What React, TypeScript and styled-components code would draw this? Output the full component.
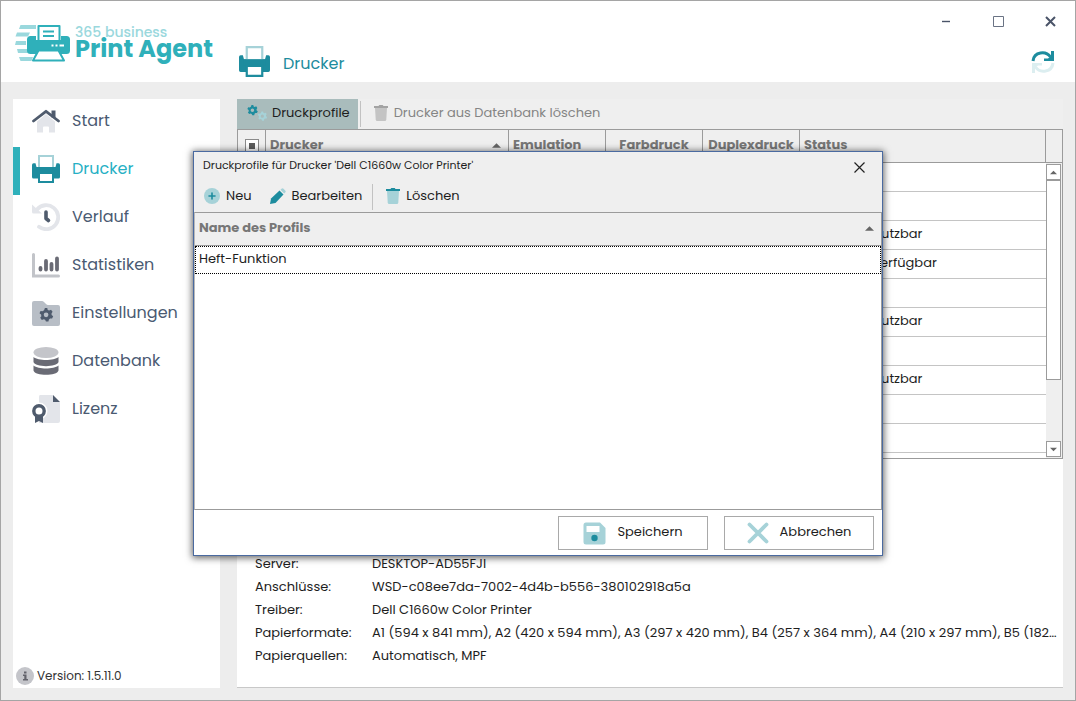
import React from "react";
import styled, { createGlobalStyle } from "styled-components";

const GlobalStyle = createGlobalStyle`
  *, *::before, *::after { box-sizing: border-box; }
  body {
    margin: 0;
    font-family: Poppins, Inter, "Open Sans", sans-serif;
    font-size: 13px;
    color: #1e1e1e;
    background: #ededed;
  }
  button { font: inherit; color: inherit; border: 0; background: none; padding: 0; margin: 0; }
  svg { display: block; flex: none; }
`;

const Window = styled.div`
  position: relative;
  display: flex;
  flex-direction: column;
  min-height: 100vh;
  border: 1px solid #a5a5a5;
  background: #ededed;
`;

const Header = styled.header`
  display: flex;
  height: 81px;
  background: #fff;
`;

const Brand = styled.div`
  display: flex;
  gap: 4px;
  width: 224px;
  padding: 22px 0 0 14px;
`;

const BrandText = styled.div`
  display: flex;
  flex-direction: column;
  padding-top: 2px;
  font-weight: 600;
  white-space: nowrap;
`;

const BrandSmall = styled.span`
  font-size: 14px;
  font-weight: 500;
  line-height: 15px;
  color: #9ad8dd;
`;

const BrandLarge = styled.span`
  font-size: 24px;
  font-weight: 700;
  line-height: 18px;
  color: #2fb0ba;
`;

const PageTitle = styled.h1`
  display: flex;
  align-items: center;
  gap: 13px;
  margin: 0;
  padding-top: 43px;
  height: 78px;
  font-size: 16px;
  font-weight: 400;
  color: #1d8c9e;
  flex: 1;
  margin-left: 14px;
`;

const TitleText = styled.span`
  padding-top: 3px;
`;

const HeaderSide = styled.div`
  display: flex;
  flex-direction: column;
  align-items: flex-end;
  gap: 9px;
`;

const WindowControls = styled.div`
  display: flex;
  height: 40px;
`;

const WindowButton = styled.button`
  display: grid;
  place-items: center;
  width: 52px;
  height: 40px;
  padding-left: 2px;
`;

const RefreshButton = styled.button`
  margin-right: 20px;
`;

const Body = styled.div`
  flex: 1;
  display: flex;
  gap: 17px;
  padding: 17px 12px 12px;
`;

const Sidebar = styled.aside`
  display: flex;
  flex-direction: column;
  justify-content: space-between;
  width: 207px;
  flex: none;
  background: #fff;
`;

const NavItem = styled.a<{ $active?: boolean }>`
  display: flex;
  align-items: center;
  gap: 12px;
  height: 48px;
  padding: 0 0 4px 12px;
  border-left: 7px solid ${(p) => (p.$active ? "#2fb0ba" : "transparent")};
  color: ${(p) => (p.$active ? "#26b0c4" : "#4a5a72")};
  font-size: 16px;
  text-decoration: none;
`;

const NavLabel = styled.span`
  padding-bottom: 2px;
`;

const Version = styled.div`
  display: flex;
  align-items: center;
  gap: 3px;
  height: 24px;
  padding-left: 3px;
  font-size: 12px;
  color: #333;
`;

const Main = styled.main`
  flex: 1;
  min-width: 0;
  display: flex;
  flex-direction: column;
  background: #fff;
  border-bottom: 1px solid #c8c8c8;
`;

const Toolbar = styled.div`
  display: flex;
  align-items: center;
  height: 30px;
  background: #efefef;
`;

const ToolButton = styled.button<{ $active?: boolean; $muted?: boolean }>`
  display: flex;
  align-items: center;
  gap: ${(p) => (p.$active ? "5px" : "6px")};
  height: 30px;
  padding: 0 8px 2px 10px;
  white-space: nowrap;
  background: ${(p) => (p.$active ? "#a9bcbc" : "transparent")};
  color: ${(p) => (p.$muted ? "#858585" : "inherit")};
`;

const Divider = styled.span`
  width: 1px;
  height: 26px;
  margin: 0 3px 0 2px;
  background: #c2c2c2;
`;

const GridFrame = styled.div`
  display: flex;
  min-height: 330px;
  border: 1px solid #9b9b9b;
`;

const GridArea = styled.div`
  flex: 1;
  min-width: 0;
`;

const Table = styled.table`
  width: 100%;
  table-layout: fixed;
  border-collapse: separate;
  border-spacing: 0;
`;

const Th = styled.th<{ $w?: number; $center?: boolean }>`
  width: ${(p) => (p.$w ? p.$w + "px" : "auto")};
  height: 33px;
  padding: 0 4px 2px;
  text-align: ${(p) => (p.$center ? "center" : "left")};
  font-weight: 700;
  white-space: nowrap;
  color: #777;
  background: #efefef;
  border-right: 1px solid #9b9b9b;
  border-bottom: 1px solid #9b9b9b;
`;

const HeadLabel = styled.span`
  display: flex;
  justify-content: space-between;
  align-items: center;
  line-height: 16px;
  padding-right: 3px;
`;

const TickBox = styled.input`
  appearance: none;
  display: block;
  width: 14px;
  height: 14px;
  margin: 2px 0 0 3px;
  padding: 3px;
  border: 1px solid #8a8a8a;
  background-color: #fff;
  background-image: linear-gradient(#5c5c5c, #5c5c5c);
  background-origin: content-box;
  background-size: 6px 6px;
  background-repeat: no-repeat;
`;

const Td = styled.td`
  height: 29px;
  padding: 0 0 2px 36px;
  white-space: nowrap;
  border-bottom: 1px solid #c4c4c4;
`;

const ScrollColumn = styled.div`
  display: flex;
  flex-direction: column;
  width: 16px;
  background: #efefef;
`;

const ScrollHead = styled.div`
  height: 33px;
  border-bottom: 1px solid #9b9b9b;
`;

const ScrollTrack = styled.div`
  flex: 1;
  display: flex;
  flex-direction: column;
  padding: 1px 1px 1px 0;
`;

const ScrollButton = styled.button`
  display: grid;
  place-items: center;
  height: 16px;
  border: 1px solid #9b9b9b;
  background: #fff;
`;

const ScrollThumb = styled.div`
  height: 200px;
  margin-bottom: auto;
  border: 1px solid #9b9b9b;
  background: #fff;
`;

const Details = styled.dl`
  flex: 1;
  display: flex;
  flex-direction: column;
  justify-content: flex-end;
  margin: 0;
  padding: 0 4px 20px 18px;
`;

const DetailRow = styled.div`
  display: flex;
  line-height: 23px;
`;

const Term = styled.dt`
  width: 117px;
  flex: none;
`;

const Value = styled.dd`
  margin: 0;
  min-width: 0;
  overflow: hidden;
  text-overflow: ellipsis;
  white-space: nowrap;
`;

const Overlay = styled.div`
  position: absolute;
  inset: 0;
  display: flex;
  justify-content: center;
  align-items: flex-start;
  padding-top: 150px;
`;

const Dialog = styled.section`
  display: flex;
  flex-direction: column;
  width: 690px;
  max-width: 100%;
  border: 1px solid #4a6aa0;
  background: #efefef;
  box-shadow: 0 1px 7px 1px rgba(0, 0, 0, 0.6);
`;

const DialogHead = styled.div`
  display: flex;
  justify-content: space-between;
  height: 30px;
  padding: 0 12px 0 9px;
`;

const DialogTitle = styled.h2`
  margin: 0;
  font-size: 11px;
  font-weight: 400;
  line-height: 27px;
`;

const CloseButton = styled.button`
  display: grid;
  place-items: center;
  width: 22px;
  height: 30px;
`;

const ProfileList = styled.div`
  min-height: 298px;
  background: #fff;
  border: 1px solid #9b9b9b;
  border-left-color: #b8b8b8;
`;

const ProfileTh = styled.th`
  height: 33px;
  padding: 0 4px 2px;
  text-align: left;
  font-weight: 700;
  color: #777;
  background: #efefef;
  border-bottom: 1px solid #9b9b9b;
`;

const ProfileTd = styled.td`
  height: 28px;
  padding: 0 0 3px 3px;
  border: 1px dotted #000;
`;

const DialogFoot = styled.div`
  display: flex;
  justify-content: flex-end;
  gap: 16px;
  padding: 6px 8px 5px;
  background: #fff;
`;

const FootButton = styled.button`
  display: flex;
  align-items: center;
  justify-content: center;
  gap: 11px;
  width: 150px;
  height: 34px;
  border: 1px solid #a9a9a9;
  background: #fff;
`;

const FootLabel = styled.span`
  padding-bottom: 2px;
`;

const gearPath =
  "M5 0h2l.4 1.6 1.2.6L10.200 1.500 11.500 3.200 10.600 4.600 10.700 6 12 7l-.9 2-1.700-.1-1 .9L8 11.500H5.900L5.200 10 4 9.500l-1.600.6L1 8.300 2 7 1.800 5.500.400 4.500 1.300 2.600 3 2.800l1.300-.9zM6 3.800a2 2 0 1 0 0 4 2 2 0 0 0 0-4z";

const PrinterIcon = ({ size = 28 }: { size?: number }) => (
  <svg width={size} height={size} viewBox="0 0 28 28">
    <path fill="#1d8c9e" d="M0 10Q0 8.300 1.500 8.300H3.500L4.500 12H23.500L24.500 8.300H26.500Q28 8.300 28 10V22Q28 23.500 26.500 23.500H1.500Q0 23.500 0 22z" />
    <path fill="#fff" stroke="#a6d2d8" strokeWidth="2" d="M7 12V1h14v11" />
    <path fill="#1d8c9e" d="M4 12h20v6H4z" />
    <path fill="#fff" stroke="#1d8c9e" strokeWidth="2" d="M7 18h14v9H7z" />
  </svg>
);

const HomeIcon = () => (
  <svg width="28" height="28" viewBox="0 0 28 28">
    <path fill="#e3e5ea" d="M14 7 23 14.500v11h-6v-5q0-1-1-1h-4q-1 0-1 1v5H5v-11z" />
    <path fill="#4f5b6d" d="M19.500 3.500h4v7h-4z" />
    <path fill="none" stroke="#4f5b6d" strokeWidth="2.800" strokeLinecap="round" strokeLinejoin="round" d="M1.500 14 14 4.300 26.500 14" />
  </svg>
);

const HistoryIcon = () => (
  <svg width="28" height="28" viewBox="0 0 28 28">
    <path fill="none" stroke="#e3e5ea" strokeWidth="3.800" strokeLinecap="round" d="M5 6.500A12 12 0 1 1 7 23.800" />
    <path fill="#e3e5ea" d="M0 1.500 10 10.500H1.500Q0 10.500 0 9z" />
    <path fill="none" stroke="#4f5b6d" strokeWidth="3.600" strokeLinecap="round" strokeLinejoin="round" d="M14 9v6.500l2.500 2" />
  </svg>
);

const ChartIcon = () => (
  <svg width="28" height="28" viewBox="0 0 28 28">
    <path fill="none" stroke="#c2c4c9" strokeWidth="3" strokeLinecap="round" d="M1.500 3.500V25H26.500" />
    <path fill="none" stroke="#6a6b75" strokeWidth="3.800" strokeLinecap="round" d="M8.500 17v1.500M14 10v8.500M19.500 13v5.500M25 7.500v11" />
  </svg>
);

const FolderIcon = () => (
  <svg width="28" height="28" viewBox="0 0 28 28">
    <path fill="#b8bec6" d="M2 2h8q1 0 2 1l2 2q1 1 2 1h10q2 0 2 2v17q0 2-2 2H2q-2 0-2-2V4q0-2 2-2z" />
    <g transform="translate(7 9) scale(1.180)">
      <path fill="#4f5b6d" fillRule="evenodd" d={gearPath} />
    </g>
  </svg>
);

const DatabaseIcon = () => (
  <svg width="28" height="28" viewBox="0 0 28 28">
    <path fill="#6a6b75" d="M1.500 18.500C6 22.500 22 22.500 26.500 18.500V23.500C25 29.300 3 29.300 1.500 23.500z" />
    <path fill="#6a6b75" d="M1.500 10C6 14 22 14 26.500 10V15C25 20.500 3 20.500 1.500 15z" />
    <ellipse cx="14" cy="5.500" rx="12.500" ry="5.500" fill="#c4c5ca" />
  </svg>
);

const LicenseIcon = () => (
  <svg width="28" height="28" viewBox="0 0 28 28">
    <path fill="#e3e5ea" d="M8 0h13v7h7v19q0 2-2 2H7V2q0-2 1-2z" />
    <path fill="#4f5b6d" d="M21 0l7 7h-7z" />
    <circle cx="7" cy="16" r="8.500" fill="#fff" />
    <path fill="#4f5b6d" d="M3 20v8l4-2 4 2v-8z" />
    <circle cx="7" cy="16" r="5.200" fill="#fff" stroke="#4f5b6d" strokeWidth="3.400" />
  </svg>
);

const InfoIcon = () => (
  <svg width="18" height="18" viewBox="0 0 18 18">
    <circle cx="9" cy="9" r="9" fill="#c4c5ca" />
    <path fill="#62636b" d="M8 4.500h2.500v2H8zM7 7.500h3.500V12H12v1.500H7V12h1.300V9H7z" />
  </svg>
);

const TrashIcon = ({ lid, can }: { lid: string; can: string }) => (
  <svg width="14" height="16" viewBox="0 0 14 16">
    <path fill={can} d="M1 3h12l-.7 11.500Q12.200 16 10.800 16H3.200Q1.800 16 1.700 14.500z" />
    <path fill={lid} d="M0 1h4.500L5.300 0h3.400l.8 1H14v2H0z" />
  </svg>
);

const GearsIcon = () => (
  <svg width="20" height="16" viewBox="0 0 20 16">
    <path fill="#1d8c9e" fillRule="evenodd" d={gearPath} transform="scale(.9)" />
    <path fill="#a6d2d8" fillRule="evenodd" d={gearPath} transform="translate(10.500 6.500) scale(.8)" />
  </svg>
);

const PlusIcon = () => (
  <svg width="16" height="16" viewBox="0 0 16 16">
    <circle cx="8" cy="8" r="8" fill="#a6d2d8" />
    <path stroke="#1d8c9e" strokeWidth="1.600" strokeLinecap="round" d="M8 5v6M5 8h6" />
  </svg>
);

const PencilIcon = () => (
  <svg width="16" height="16" viewBox="0 0 16 16">
    <path fill="#1d8c9e" d="M1 10.500 9.500 2.500l4 4L5.500 15 0 16z" />
    <path fill="#a6d2d8" d="M10.500 1.800 11.500.8q1-1 2 0L15.200 2.500q1 1 0 2L14.200 5.500z" />
  </svg>
);

const SaveIcon = () => (
  <svg width="23" height="23" viewBox="0 0 23 23">
    <path fill="#a6d2d8" d="M3 .5h14L22.500 6v14q0 2.500-2.500 2.500H3Q.5 22.500.5 20V3Q.5.5 3 .5z" />
    <path fill="#fff" d="M3.500 4h13v6h-13z" />
    <circle cx="11.500" cy="16" r="3.200" fill="#1d8c9e" />
  </svg>
);

const CancelIcon = () => (
  <svg width="22" height="22" viewBox="0 0 22 22">
    <path stroke="#a6d2d8" strokeWidth="3.800" strokeLinecap="round" d="M2.500 2.500l17 17M19.500 2.500l-17 17" />
  </svg>
);

const RefreshIcon = () => (
  <svg width="24" height="24" viewBox="0 0 24 24">
    <path fill="none" stroke="#1d8c9e" strokeWidth="3" d="M2 11C3 1.500 15 .500 19.500 7" />
    <path fill="#1d8c9e" d="M20 1h3v10H13V8.500h4L20 6z" />
    <path fill="none" stroke="#dceef0" strokeWidth="3" d="M22 13C21 22.500 9 23.500 4.500 17" />
    <path fill="#dceef0" d="M4 23H1V13h10v2.500H7L4 18z" />
  </svg>
);

const LogoIcon = () => (
  <svg width="56" height="40" viewBox="15 23 56 40">
    <path fill="#9ad8dd" d="M20.500 25H36v4H19zM17 32.500h13l-2 4H15.500zM16 41h10v4H15zM17 49h10l2 4H18zM19 57h14l-1.500 4H20.500z" />
    <rect x="27" y="36" width="43" height="18" rx="3.500" fill="#2fb0ba" />
    <path fill="#fff" d="M36 25h25v15H36z" />
    <path fill="#fff" stroke="#2fb0ba" strokeWidth="2" strokeLinejoin="round" d="M38.500 40V26h21v14" />
    <path stroke="#2fb0ba" strokeWidth="1.800" d="M43 31.500h11M43 36h11" />
    <path fill="#2fb0ba" d="M35 40h27v8H35z" />
    <path fill="#fff" stroke="#2fb0ba" strokeWidth="2" strokeLinejoin="round" d="M38.500 50.500h20L64 60.500H33z" />
    <path stroke="#fff" strokeWidth="1.800" d="M51.500 45.500h2M55.500 45.500h2M59.500 45.500h4.500" />
  </svg>
);

const Arrow = ({ down, w = 9 }: { down?: boolean; w?: number }) => (
  <svg width={w} height="5" viewBox="0 0 10 5">
    <path fill="#666" d={down ? "M0 0h10L5 5z" : "M0 5h10L5 0z"} />
  </svg>
);

const navItems = [
  { label: "Start", icon: <HomeIcon /> },
  { label: "Drucker", icon: <PrinterIcon />, active: true },
  { label: "Verlauf", icon: <HistoryIcon /> },
  { label: "Statistiken", icon: <ChartIcon /> },
  { label: "Einstellungen", icon: <FolderIcon /> },
  { label: "Datenbank", icon: <DatabaseIcon /> },
  { label: "Lizenz", icon: <LicenseIcon /> },
];

const statuses = ["", "", "Nicht nutzbar", "Nicht verfügbar", "", "Nicht nutzbar", "", "Nicht nutzbar", "", ""];

const details = [
  ["Server:", "DESKTOP-AD55FJI"],
  ["Anschlüsse:", "WSD-c08ee7da-7002-4d4b-b556-380102918a5a"],
  ["Treiber:", "Dell C1660w Color Printer"],
  [
    "Papierformate:",
    "A1 (594 x 841 mm), A2 (420 x 594 mm), A3 (297 x 420 mm), B4 (257 x 364 mm), A4 (210 x 297 mm), B5 (182 x 257 mm)",
  ],
  ["Papierquellen:", "Automatisch, MPF"],
];

export default function App() {
  return (
    <Window>
      <GlobalStyle />
      <Header>
        <Brand>
          <LogoIcon />
          <BrandText>
            <BrandSmall>365 business</BrandSmall>
            <BrandLarge>Print Agent</BrandLarge>
          </BrandText>
        </Brand>
        <PageTitle>
          <PrinterIcon size={31} />
          <TitleText>Drucker</TitleText>
        </PageTitle>
        <HeaderSide>
          <WindowControls>
            <WindowButton aria-label="Minimieren">
              <svg width="10" height="10" viewBox="0 0 10 10"><path stroke="#4a5468" strokeWidth="1.400" d="M1 5.500h8" /></svg>
            </WindowButton>
            <WindowButton aria-label="Maximieren">
              <svg width="11" height="11" viewBox="0 0 11 11"><path fill="none" stroke="#6a7384" d="M.5.500h10v10h-10z" /></svg>
            </WindowButton>
            <WindowButton aria-label="Schließen">
              <svg width="11" height="11" viewBox="0 0 11 11"><path stroke="#4a5468" strokeWidth="2" d="M1 1l9 9M10 1l-9 9" /></svg>
            </WindowButton>
          </WindowControls>
          <RefreshButton aria-label="Aktualisieren"><RefreshIcon /></RefreshButton>
        </HeaderSide>
      </Header>
      <Body>
        <Sidebar>
          <nav>
            {navItems.map((n) => (
              <NavItem key={n.label} href="#" $active={n.active}>
                {n.icon}
                <NavLabel>{n.label}</NavLabel>
              </NavItem>
            ))}
          </nav>
          <Version>
            <InfoIcon />
            Version: 1.5.11.0
          </Version>
        </Sidebar>
        <Main>
          <Toolbar>
            <ToolButton $active>
              <GearsIcon />
              Druckprofile
            </ToolButton>
            <Divider />
            <ToolButton $muted>
              <TrashIcon lid="#a3a3a3" can="#c4c4c4" />
              Drucker aus Datenbank löschen
            </ToolButton>
          </Toolbar>
          <GridFrame>
            <GridArea>
              <Table>
                <thead>
                  <tr>
                    <Th $w={28}><TickBox type="checkbox" aria-label="Alle auswählen" /></Th>
                    <Th $w={243}><HeadLabel>Drucker<Arrow /></HeadLabel></Th>
                    <Th $w={97}>Emulation</Th>
                    <Th $w={97} $center>Farbdruck</Th>
                    <Th $w={97} $center>Duplexdruck</Th>
                    <Th>Status</Th>
                  </tr>
                </thead>
                <tbody>
                  {statuses.map((s, i) => (
                    <tr key={i}>
                      <Td /><Td /><Td /><Td /><Td />
                      <Td>{s}</Td>
                    </tr>
                  ))}
                </tbody>
              </Table>
            </GridArea>
            <ScrollColumn>
              <ScrollHead />
              <ScrollTrack>
                <ScrollButton aria-label="Nach oben"><Arrow w={7} /></ScrollButton>
                <ScrollThumb />
                <ScrollButton aria-label="Nach unten"><Arrow down w={7} /></ScrollButton>
              </ScrollTrack>
            </ScrollColumn>
          </GridFrame>
          <Details>
            {details.map(([k, v]) => (
              <DetailRow key={k}>
                <Term>{k}</Term>
                <Value>{v}</Value>
              </DetailRow>
            ))}
          </Details>
        </Main>
      </Body>
      <Overlay>
        <Dialog role="dialog" aria-labelledby="dialog-title">
          <DialogHead>
            <DialogTitle id="dialog-title">Druckprofile für Drucker 'Dell C1660w Color Printer'</DialogTitle>
            <CloseButton aria-label="Schließen">
              <svg width="11" height="11" viewBox="0 0 11 11"><path stroke="#222" strokeWidth="1.200" d="M.5.500l10 10M10.500.500l-10 10" /></svg>
            </CloseButton>
          </DialogHead>
          <Toolbar>
            <ToolButton><PlusIcon />Neu</ToolButton>
            <ToolButton><PencilIcon />Bearbeiten</ToolButton>
            <Divider />
            <ToolButton><TrashIcon lid="#1d8c9e" can="#a6d2d8" />Löschen</ToolButton>
          </Toolbar>
          <ProfileList>
            <Table>
              <thead>
                <tr>
                  <ProfileTh><HeadLabel>Name des Profils<Arrow /></HeadLabel></ProfileTh>
                </tr>
              </thead>
              <tbody>
                <tr>
                  <ProfileTd>Heft-Funktion</ProfileTd>
                </tr>
              </tbody>
            </Table>
          </ProfileList>
          <DialogFoot>
            <FootButton><SaveIcon /><FootLabel>Speichern</FootLabel></FootButton>
            <FootButton><CancelIcon /><FootLabel>Abbrechen</FootLabel></FootButton>
          </DialogFoot>
        </Dialog>
      </Overlay>
    </Window>
  );
}
